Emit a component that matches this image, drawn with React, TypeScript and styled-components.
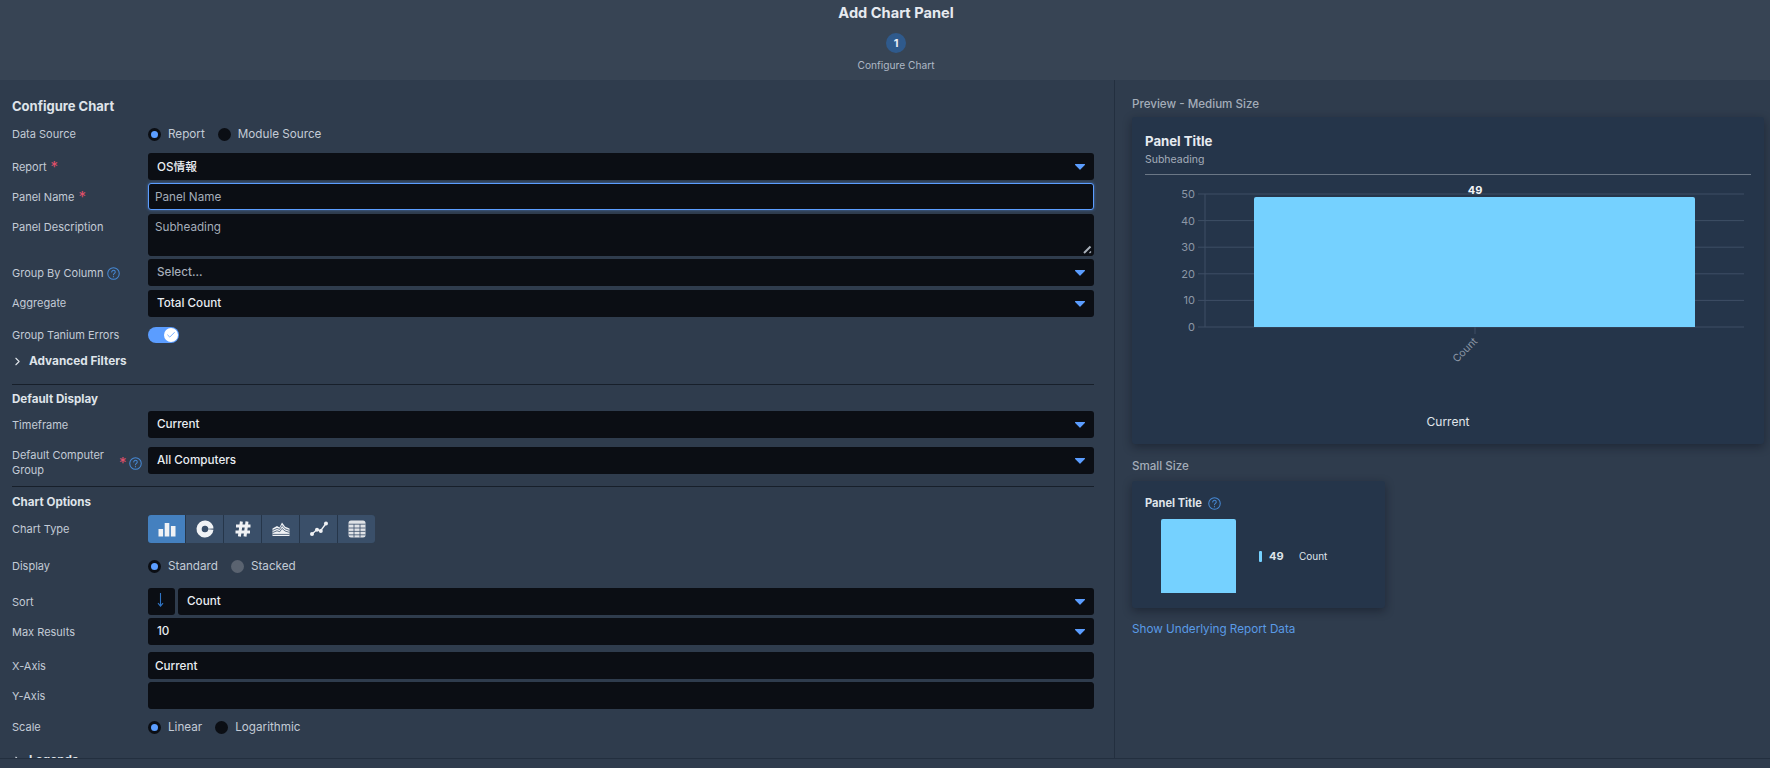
import React from "react";
import styled, { createGlobalStyle } from "styled-components";
import { Check, ChevronRight } from "lucide-react";

const Global = createGlobalStyle`
  html, body { margin: 0; padding: 0; height: 100%; background: #2f3c4d; overflow: hidden; }
  #root { height: 100%; }
  * { box-sizing: border-box; }
  body { font-family: Inter, "Noto Sans CJK JP", "Liberation Sans", sans-serif; font-size: 12px; color: #c5cdd8; }
`;

const Page = styled.div`
  height: 768px;
  display: flex;
  flex-direction: column;
  overflow: hidden;
`;
const Header = styled.header`
  height: 80px;
  flex: none;
  background: #374454;
  display: flex;
  flex-direction: column;
  align-items: center;
  padding: 3px 0 0 22px;
`;
const HeaderTitle = styled.h1`
  margin: 0;
  height: 20px;
  line-height: 20px;
  font-size: 14.6px;
  font-weight: 700;
  color: #e6eaf0;
`;
const StepCircle = styled.div`
  margin-top: 10px;
  width: 20px;
  height: 20px;
  border-radius: 50%;
  background: #2f5a8c;
  color: #e8eef6;
  font-size: 11px;
  font-weight: 700;
  display: flex;
  align-items: center;
  justify-content: center;
`;
const StepLabel = styled.div`
  margin-top: 5px;
  height: 14px;
  line-height: 14px;
  font-size: 10.2px;
  color: #aeb8c5;
`;
const Body = styled.div`
  flex: 1;
  min-height: 0;
  display: flex;
  overflow: hidden;
`;
const FormPanel = styled.section`
  width: 1115px;
  flex: none;
  padding: 0 20px 0 12px;
  border-right: 1px solid #232f3f;
  overflow: hidden;
`;
const PreviewPanel = styled.aside`
  flex: 1;
  padding: 0 6px 0 17px;
`;
const Footer = styled.footer`
  height: 10px;
  flex: none;
  border-top: 1px solid #232f3f;
  background: #2f3c4d;
`;
const SectionTitle = styled.h2<{ $mt: number; $size?: number }>`
  margin: ${(p) => p.$mt}px 0 0;
  height: 18px;
  line-height: 18px;
  font-size: ${(p) => p.$size ?? 11.6}px;
  font-weight: 700;
  color: #dfe4ea;
`;
const Row = styled.div<{ $mt: number; $h?: number }>`
  margin-top: ${(p) => p.$mt}px;
  display: grid;
  grid-template-columns: 136px 1fr;
  grid-template-rows: ${(p) => p.$h ?? 27}px;
  align-items: center;
  height: ${(p) => p.$h ?? 27}px;
`;
const Label = styled.label<{ $pad?: number }>`
  display: flex;
  align-items: center;
  gap: 3px;
  font-size: 11px;
  line-height: 15px;
  color: #c3cbd6;
  padding-top: ${(p) => p.$pad ?? 0}px;
`;
const TopLabel = styled(Label)`
  align-self: start;
  padding-top: 6px;
`;
const WrapText = styled.span`
  width: 103px;
  flex: none;
`;
const Star = styled.span`
  width: 7px;
  color: #e0506a;
  font-size: 15px;
  line-height: 12px;
  height: 10px;
  margin: -3px 0 0 1px;
`;
const HelpSvg = styled.svg`
  width: 13px;
  height: 13px;
  flex: none;
  color: #4688d4;
`;
const Help = () => (
  <HelpSvg viewBox="0 0 14 14" fill="none">
    <circle cx="7" cy="7" r="6.2" stroke="currentColor" strokeWidth="1.1" />
    <path d="M5.1 5.4c0-1.1.9-1.8 1.9-1.8s1.9.7 1.9 1.7c0 1.5-1.9 1.6-1.9 3.1" stroke="currentColor" strokeWidth="1.1" strokeLinecap="round" />
    <circle cx="7" cy="10.4" r=".65" fill="currentColor" />
  </HelpSvg>
);
const Select = styled.div<{ $muted?: boolean }>`
  height: 27px;
  flex: 1;
  min-width: 0;
  background: #0b0e14;
  border-radius: 3px;
  padding: 0 9px 2px;
  display: flex;
  align-items: center;
  justify-content: space-between;
  font-size: 11.7px;
  font-weight: 500;
  color: ${(p) => (p.$muted ? "#a4adb9" : "#e9edf2")};
`;
const Caret = styled.svg`
  width: 10px;
  height: 6px;
  margin-top: 2px;
  color: #5b9dff;
`;
const DropSelect = ({ value, muted }: { value: string; muted?: boolean }) => (
  <Select $muted={muted}>
    <span>{value}</span>
    <Caret viewBox="0 0 10 6">
      <path d="M.6 0h8.8c.5 0 .8.5.5.9L5.4 5.6a.5.5 0 0 1-.8 0L.1.9C-.2.5.1 0 .6 0z" fill="currentColor" />
    </Caret>
  </Select>
);
const TextInput = styled.input<{ $focus?: boolean }>`
  display: block;
  width: 100%;
  height: 27px;
  background: #0b0e14;
  border: 1px solid ${(p) => (p.$focus ? "#5b9dff" : "#0b0e14")};
  border-radius: 3px;
  padding: 0 6px;
  outline: none;
  font: 500 11.7px Inter, sans-serif;
  color: #e9edf2;
  box-shadow: ${(p) => (p.$focus ? "0 0 3px rgba(91,157,255,.55)" : "none")};
  &::placeholder { color: #a4adb9; font-weight: 400; opacity: 1; }
`;
const TextAreaWrap = styled.div`
  position: relative;
  height: 42px;
`;
const TextArea = styled.textarea`
  display: block;
  width: 100%;
  height: 42px;
  background: #0b0e14;
  border: 1px solid #0b0e14;
  border-radius: 3px;
  padding: 5px 6px;
  outline: none;
  resize: none;
  font: 400 11.7px Inter, sans-serif;
  color: #e9edf2;
  &::placeholder { color: #a4adb9; opacity: 1; }
`;
const ResizeGrip = styled.svg`
  position: absolute;
  right: 2px;
  bottom: 2px;
  width: 9px;
  height: 9px;
`;
const RadioGroup = styled.div`
  display: flex;
  align-items: center;
  gap: 13px;
`;
const RadioItem = styled.span`
  display: flex;
  align-items: center;
  gap: 7px;
  font-size: 11.7px;
  color: #c3cbd6;
`;
const RadioDot = styled.span<{ $on?: boolean; $off?: boolean }>`
  width: 13px;
  height: 13px;
  border-radius: 50%;
  background: ${(p) => (p.$off ? "#5a6370" : "#0b0e14")};
  display: flex;
  align-items: center;
  justify-content: center;
  &::after {
    content: "";
    width: 7px;
    height: 7px;
    border-radius: 50%;
    background: ${(p) => (p.$on ? "#5b9dff" : "transparent")};
  }
`;
const Radio = ({ label, on, off }: { label: string; on?: boolean; off?: boolean }) => (
  <RadioItem>
    <RadioDot $on={on} $off={off} />
    {label}
  </RadioItem>
);
const Toggle = styled.span`
  width: 31px;
  height: 16px;
  border-radius: 8px;
  background: #5b9dff;
  display: flex;
  align-items: center;
  justify-content: flex-end;
  padding-right: 1px;
`;
const Knob = styled.span`
  width: 14px;
  height: 14px;
  border-radius: 50%;
  background: #fff;
  display: flex;
  align-items: center;
  justify-content: center;
  color: #5b9dff;
`;
const Disclosure = styled.div<{ $mt: number }>`
  margin-top: ${(p) => p.$mt}px;
  margin-left: -1.5px;
  height: 18px;
  display: flex;
  align-items: center;
  gap: 5.5px;
  font-size: 11.8px;
  font-weight: 700;
  color: #dfe4ea;
`;
const Divider = styled.hr<{ $mt: number }>`
  margin: ${(p) => p.$mt}px 0 0;
  border: 0;
  height: 1px;
  background: #171f2a;
`;
const ChartTypes = styled.div`
  display: flex;
  width: 227px;
  height: 28px;
  border-radius: 3px;
  overflow: hidden;
  gap: 1px;
  background: #26364a;
`;
const ChartTypeBtn = styled.button<{ $active?: boolean }>`
  flex: 1;
  border: 0;
  padding: 0;
  background: ${(p) => (p.$active ? "#4480bf" : "#3a4f69")};
  display: flex;
  align-items: center;
  justify-content: center;
  color: #f0f2f5;
`;
const TypeIcon = styled.svg`
  width: 18px;
  height: 18px;
`;
const SortControl = styled.div`
  display: flex;
  gap: 3px;
`;
const SortDir = styled.button`
  width: 27px;
  height: 27px;
  flex: none;
  border: 0;
  border-radius: 3px;
  padding: 0 2px 3px 0;
  background: #0b0e14;
  color: #2f74c4;
  display: flex;
  align-items: center;
  justify-content: center;
`;
const SortArrow = styled.svg`
  width: 7px;
  height: 14px;
`;
const PreviewLabel = styled.div<{ $mt: number }>`
  margin-top: ${(p) => p.$mt}px;
  height: 18px;
  line-height: 18px;
  font-size: 11.6px;
  font-weight: 500;
  color: #a4adb9;
`;
const Card = styled.div<{ $mt: number; $w: number; $h: number }>`
  margin-top: ${(p) => p.$mt}px;
  width: ${(p) => p.$w}px;
  height: ${(p) => p.$h}px;
  background: #25354a;
  border-radius: 3px;
  box-shadow: 0 3px 10px rgba(10, 16, 26, 0.45);
  padding: 0 13px;
  display: flex;
  flex-direction: column;
`;
const CardTitle = styled.div`
  margin-top: 15px;
  height: 18px;
  line-height: 18px;
  font-size: 13.2px;
  font-weight: 700;
  color: #e6eaf0;
`;
const CardSub = styled.div`
  margin-top: 2px;
  height: 16px;
  line-height: 16px;
  font-size: 10.5px;
  color: #a4adb9;
`;
const CardRule = styled.div`
  margin-top: 6px;
  height: 1px;
  background: #6b7786;
`;
const ChartSvg = styled.svg`
  display: block;
  width: 606px;
  height: 232px;
  flex: none;
  text { font-family: Inter, sans-serif; }
`;
const XTitle = styled.div`
  margin-top: 7px;
  height: 16px;
  line-height: 16px;
  text-align: center;
  font-size: 12px;
  color: #e0e5ea;
`;
const SmallHead = styled.div`
  margin-top: 13px;
  height: 18px;
  display: flex;
  align-items: center;
  gap: 6px;
  font-size: 11.1px;
  font-weight: 700;
  color: #dfe4ea;
`;
const SmallBody = styled.div`
  margin-top: 7px;
  display: flex;
  align-items: center;
  padding-left: 16px;
`;
const SmallBar = styled.div`
  width: 75px;
  height: 74px;
  background: #75d1ff;
  border-radius: 2px 2px 0 0;
`;
const LegendMark = styled.span`
  margin-left: 23px;
  width: 3px;
  height: 11px;
  border-radius: 1px;
  background: #75d1ff;
`;
const LegendValue = styled.span`
  margin-left: 7px;
  width: 30px;
  font-size: 11px;
  font-weight: 700;
  color: #dfe4ea;
`;
const LegendName = styled.span`
  font-size: 10px;
  color: #dfe4ea;
`;
const ReportLink = styled.a`
  display: block;
  margin-top: 12px;
  height: 18px;
  line-height: 18px;
  font-size: 11.7px;
  color: #5a9be6;
`;

const gridYs = [19, 45.6, 72.2, 98.8, 125.4, 152];

const MediumChart = () => (
  <ChartSvg viewBox="0 0 606 232">
    {gridYs.map((y, i) => (
      <g key={y}>
        <line x1="53" x2="599" y1={y} y2={y} stroke="#3e4f65" />
        <text x="50" y={y + 4} textAnchor="end" fontSize="11" fill="#8c97a6">
          {50 - i * 10}
        </text>
      </g>
    ))}
    <line x1="60" x2="60" y1="19" y2="152" stroke="#3e4f65" />
    <line x1="330" x2="330" y1="152" y2="159" stroke="#3e4f65" />
    <path d="M109 152V24a2 2 0 0 1 2-2h437a2 2 0 0 1 2 2v128z" fill="#75d1ff" />
    <text x="330" y="19" textAnchor="middle" fontSize="11" fontWeight="700" fill="#f2f4f7">
      49
    </text>
    <text x="333" y="167" textAnchor="end" fontSize="10.5" fill="#8c97a6" transform="rotate(-45 333 167)">
      Count
    </text>
  </ChartSvg>
);

const BarIcon = () => (
  <TypeIcon viewBox="0 0 18 18" fill="currentColor">
    <rect x="0.5" y="9" width="4.6" height="7.5" />
    <rect x="6.7" y="3" width="4.6" height="13.5" />
    <rect x="12.9" y="6" width="4.6" height="10.5" />
  </TypeIcon>
);
const DonutIcon = () => (
  <TypeIcon viewBox="0 0 18 18" fill="none">
    <circle cx="9" cy="9" r="5.9" stroke="currentColor" strokeWidth="5.2" strokeDasharray="8.2 0.8 27.3 0.8" transform="rotate(-85 9 9)" />
  </TypeIcon>
);
const HashIcon = () => (
  <TypeIcon viewBox="0 0 18 18" fill="none" stroke="currentColor" strokeWidth="3">
    <path d="M7.4 1.5 5.4 16.5M13 1.5l-2 15M2 6h14.5M1.5 12H16" />
  </TypeIcon>
);
const AreaIcon = () => (
  <TypeIcon viewBox="0 0 18 18">
    <path d="M0.5 8.5 5 6l2.5 1.4L10 2.5l3.2 4.3L17.5 8.5V16H.5z" fill="currentColor" />
    <path d="M.5 10.5 5 8.4l2.6 1L10 5.4l3 3.4 4.5 1.6M.5 12.6 5 10.8l2.8.9L10 8.4l3 2.6 4.5 1.4M.5 14.4h17" fill="none" stroke="#3a4f69" strokeWidth=".8" />
  </TypeIcon>
);
const LineIcon = () => (
  <TypeIcon viewBox="0 0 18 18" fill="currentColor">
    <path d="M1.5 14.5 7 9.5l3.5 1.5 5.5-7.5" fill="none" stroke="currentColor" strokeWidth="1.4" />
    <circle cx="2" cy="14" r="2" />
    <circle cx="7" cy="9.8" r="2" />
    <circle cx="10.8" cy="11" r="2" />
    <circle cx="16" cy="3.6" r="2" />
  </TypeIcon>
);
const TableIcon = () => (
  <TypeIcon viewBox="0 0 18 18">
    <rect x="0.5" y="0.5" width="17" height="17" rx="2.5" fill="#dfe2e6" />
    <path d="M0.5 4.2h17M0.5 8h17M0.5 11.4h17M0.5 14.8h17M6 4.2v13.3M12 4.2v13.3" stroke="#3a4f69" strokeWidth="0.8" fill="none" />
  </TypeIcon>
);

export default function App() {
  return (
    <Page>
      <Global />
      <Header>
        <HeaderTitle>Add Chart Panel</HeaderTitle>
        <StepCircle>1</StepCircle>
        <StepLabel>Configure Chart</StepLabel>
      </Header>
      <Body>
        <FormPanel>
          <SectionTitle $mt={17} $size={13}>Configure Chart</SectionTitle>
          <Row $mt={9} $h={20}>
            <Label>Data Source</Label>
            <RadioGroup>
              <Radio label="Report" on />
              <Radio label="Module Source" />
            </RadioGroup>
          </Row>
          <Row $mt={9}>
            <Label $pad={2}>Report <Star>*</Star></Label>
            <DropSelect value="OS情報" />
          </Row>
          <Row $mt={3}>
            <Label $pad={2}>Panel Name <Star>*</Star></Label>
            <TextInput $focus placeholder="Panel Name" />
          </Row>
          <Row $mt={4} $h={42}>
            <TopLabel>Panel Description</TopLabel>
            <TextAreaWrap>
              <TextArea placeholder="Subheading" />
              <ResizeGrip viewBox="0 0 9 9" fill="none" stroke="#aab2bb">
                <path d="M1 8 7.5 1.5" strokeWidth="2" />
                <path d="M6.5 8 8 6.5" strokeWidth="1.2" />
              </ResizeGrip>
            </TextAreaWrap>
          </Row>
          <Row $mt={3}>
            <Label $pad={2}>Group By Column <Help /></Label>
            <DropSelect value="Select..." muted />
          </Row>
          <Row $mt={4}>
            <Label>Aggregate</Label>
            <DropSelect value="Total Count" />
          </Row>
          <Row $mt={10} $h={16}>
            <Label>Group Tanium Errors</Label>
            <Toggle>
              <Knob><Check size={10} strokeWidth={2} /></Knob>
            </Toggle>
          </Row>
          <Disclosure $mt={9}>
            <ChevronRight size={13} strokeWidth={2} />
            Advanced Filters
          </Disclosure>
          <Divider $mt={14} />
          <SectionTitle $mt={5}>Default Display</SectionTitle>
          <Row $mt={3}>
            <Label $pad={2}>Timeframe</Label>
            <DropSelect value="Current" />
          </Row>
          <Row $mt={9}>
            <Label $pad={5}>
              <WrapText>Default Computer Group</WrapText>
              <Star>*</Star>
              <Help />
            </Label>
            <DropSelect value="All Computers" />
          </Row>
          <Divider $mt={12} />
          <SectionTitle $mt={6}>Chart Options</SectionTitle>
          <Row $mt={4} $h={28}>
            <Label>Chart Type</Label>
            <ChartTypes>
              <ChartTypeBtn $active><BarIcon /></ChartTypeBtn>
              <ChartTypeBtn><DonutIcon /></ChartTypeBtn>
              <ChartTypeBtn><HashIcon /></ChartTypeBtn>
              <ChartTypeBtn><AreaIcon /></ChartTypeBtn>
              <ChartTypeBtn><LineIcon /></ChartTypeBtn>
              <ChartTypeBtn><TableIcon /></ChartTypeBtn>
            </ChartTypes>
          </Row>
          <Row $mt={13} $h={20}>
            <Label>Display</Label>
            <RadioGroup>
              <Radio label="Standard" on />
              <Radio label="Stacked" off />
            </RadioGroup>
          </Row>
          <Row $mt={12}>
            <Label $pad={2}>Sort</Label>
            <SortControl>
              <SortDir>
                <SortArrow viewBox="0 0 7 14" fill="none" stroke="currentColor" strokeWidth="1.1">
                  <path d="M3.5 0v13M1 10.2l2.5 3 2.5-3" />
                </SortArrow>
              </SortDir>
              <DropSelect value="Count" />
            </SortControl>
          </Row>
          <Row $mt={3}>
            <Label $pad={2}>Max Results</Label>
            <DropSelect value="10" />
          </Row>
          <Row $mt={7}>
            <Label $pad={2}>X-Axis</Label>
            <TextInput defaultValue="Current" />
          </Row>
          <Row $mt={3}>
            <Label $pad={2}>Y-Axis</Label>
            <TextInput />
          </Row>
          <Row $mt={8} $h={20}>
            <Label>Scale</Label>
            <RadioGroup>
              <Radio label="Linear" on />
              <Radio label="Logarithmic" />
            </RadioGroup>
          </Row>
          <Disclosure $mt={14}>
            <ChevronRight size={13} strokeWidth={2} />
            Legends
          </Disclosure>
        </FormPanel>
        <PreviewPanel>
          <PreviewLabel $mt={15}>Preview - Medium Size</PreviewLabel>
          <Card $mt={4} $w={632} $h={327}>
            <CardTitle>Panel Title</CardTitle>
            <CardSub>Subheading</CardSub>
            <CardRule />
            <MediumChart />
            <XTitle>Current</XTitle>
          </Card>
          <PreviewLabel $mt={13}>Small Size</PreviewLabel>
          <Card $mt={6} $w={253} $h={127}>
            <SmallHead>Panel Title <Help /></SmallHead>
            <SmallBody>
              <SmallBar />
              <LegendMark />
              <LegendValue>49</LegendValue>
              <LegendName>Count</LegendName>
            </SmallBody>
          </Card>
          <ReportLink>Show Underlying Report Data</ReportLink>
        </PreviewPanel>
      </Body>
      <Footer />
    </Page>
  );
}
